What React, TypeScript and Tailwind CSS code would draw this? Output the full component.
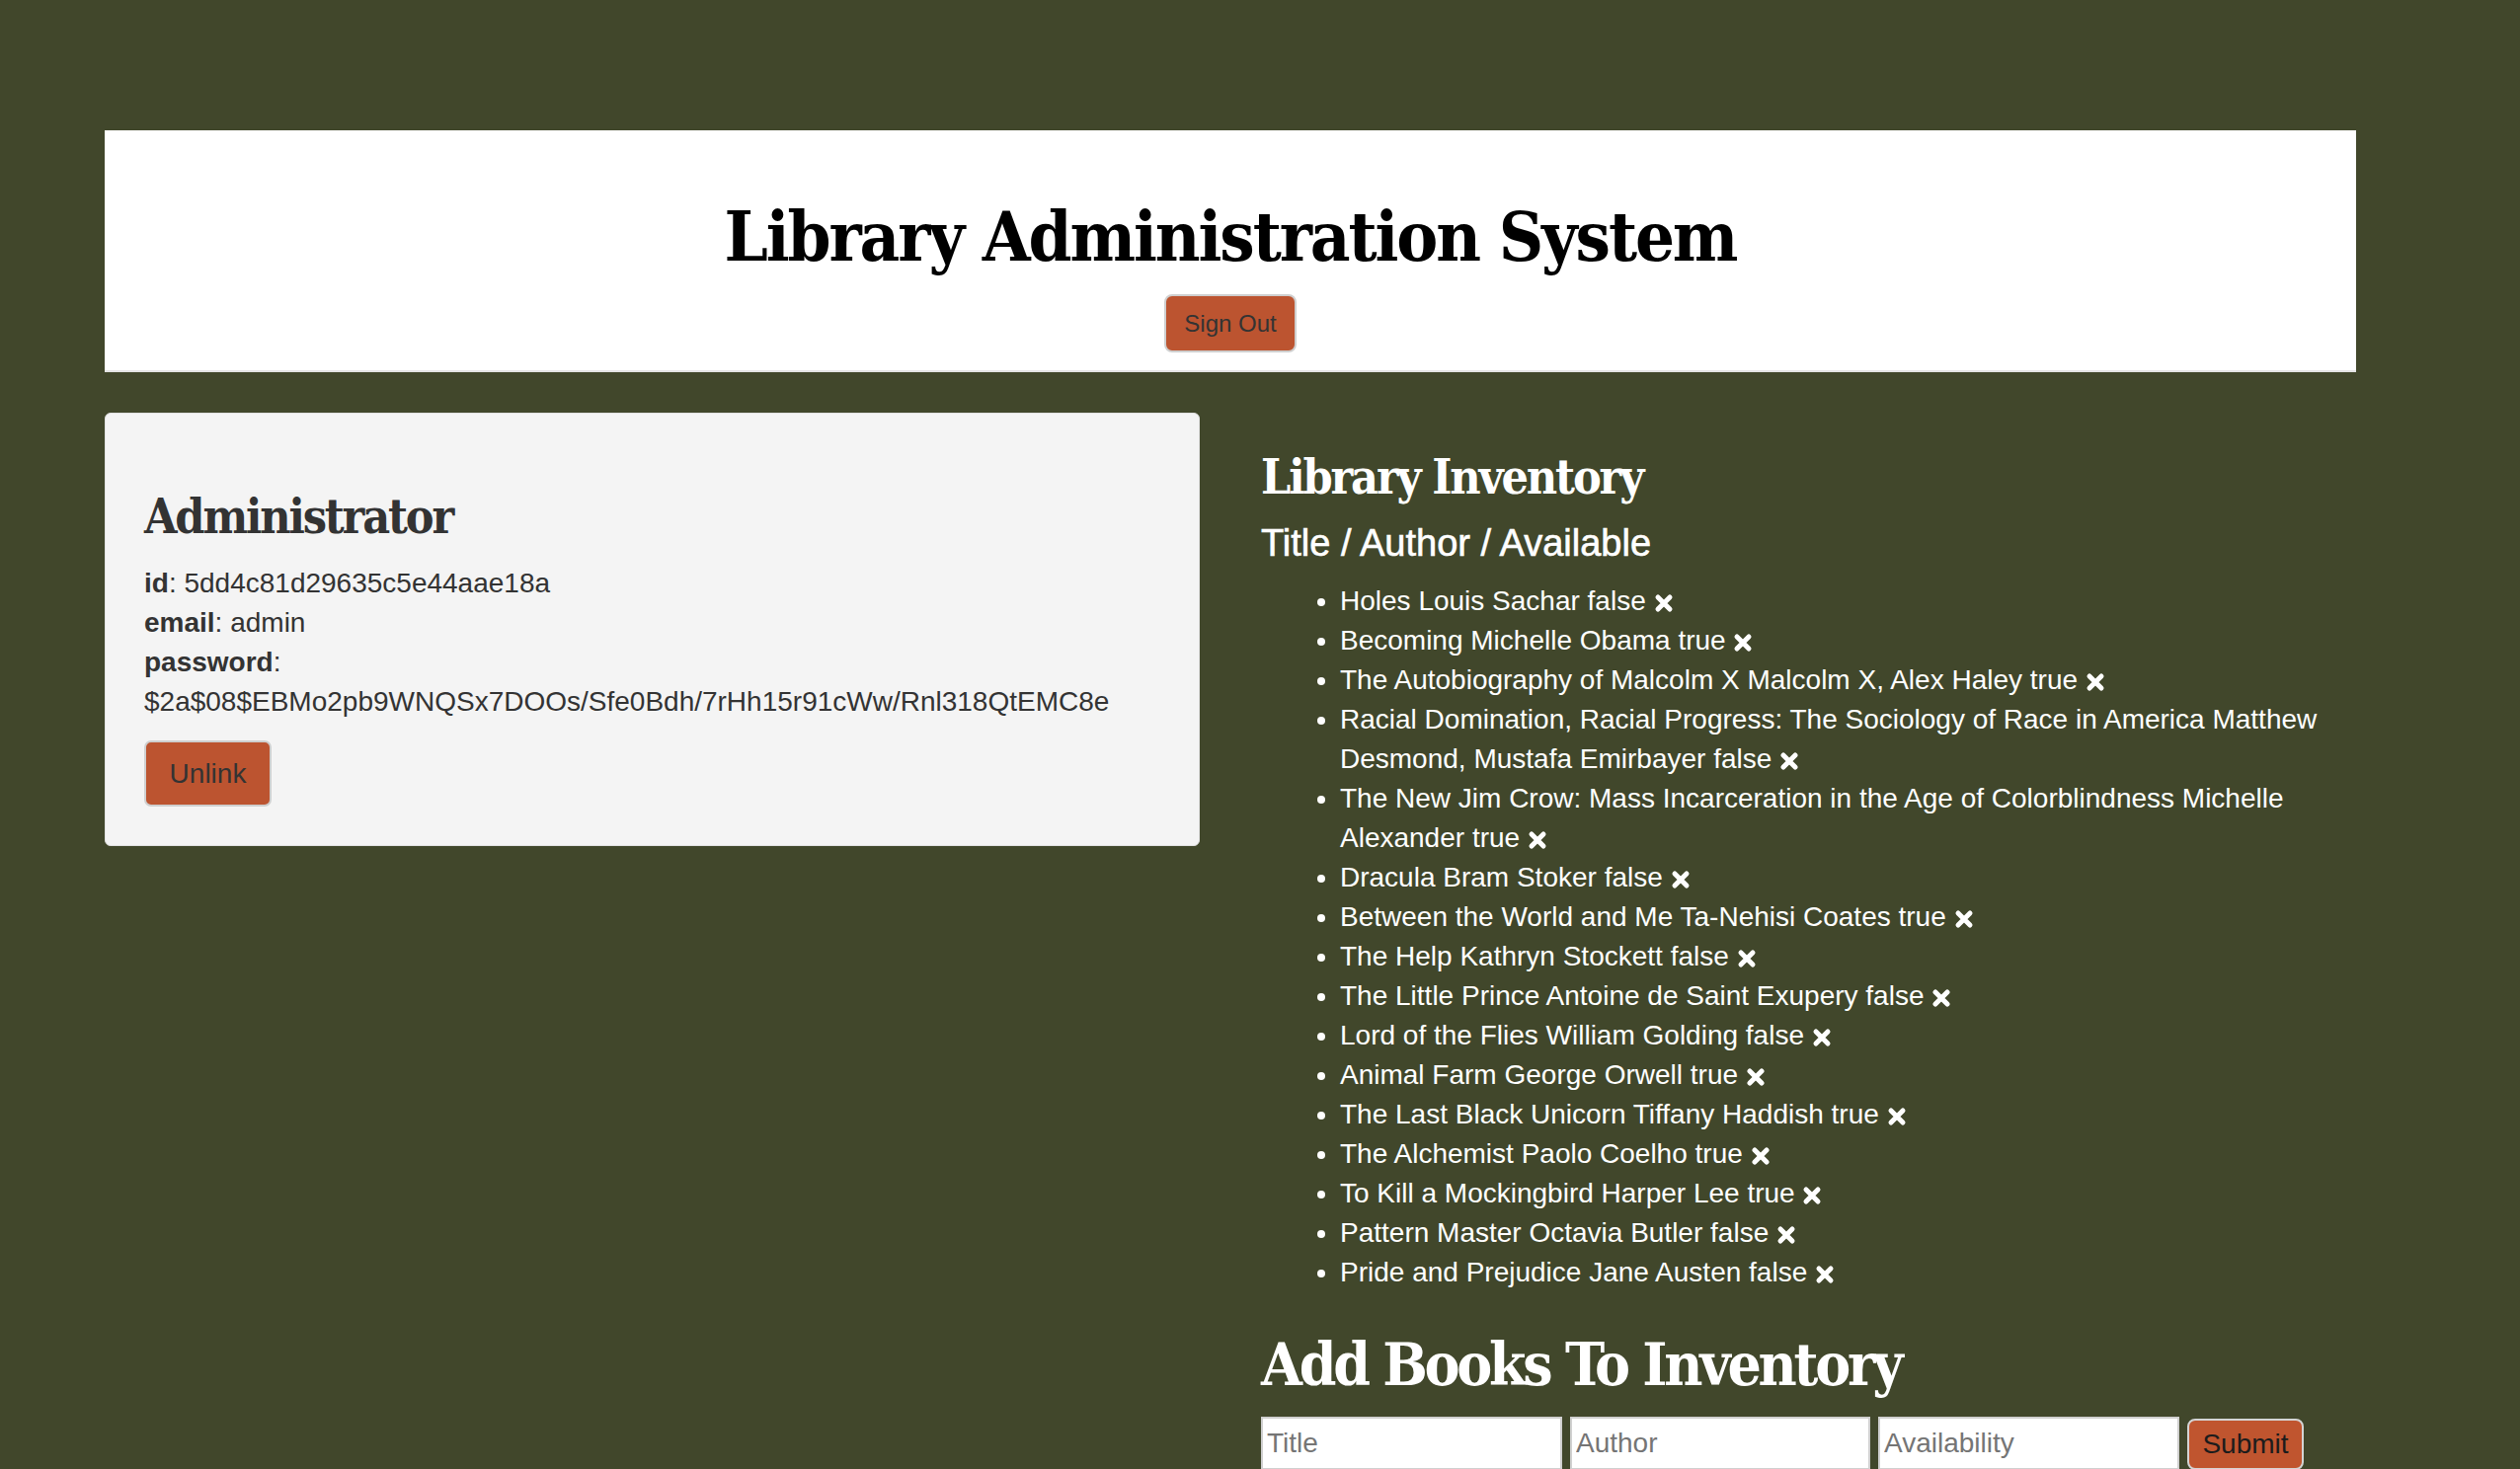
import React from 'react';

const books = [
  { title: 'Holes', author: 'Louis Sachar', available: false },
  { title: 'Becoming', author: 'Michelle Obama', available: true },
  { title: 'The Autobiography of Malcolm X', author: 'Malcolm X, Alex Haley', available: true },
  { title: 'Racial Domination, Racial Progress: The Sociology of Race in America', author: 'Matthew Desmond, Mustafa Emirbayer', available: false },
  { title: 'The New Jim Crow: Mass Incarceration in the Age of Colorblindness', author: 'Michelle Alexander', available: true },
  { title: 'Dracula', author: 'Bram Stoker', available: false },
  { title: 'Between the World and Me', author: 'Ta-Nehisi Coates', available: true },
  { title: 'The Help', author: 'Kathryn Stockett', available: false },
  { title: 'The Little Prince', author: 'Antoine de Saint Exupery', available: false },
  { title: 'Lord of the Flies', author: 'William Golding', available: false },
  { title: 'Animal Farm', author: 'George Orwell', available: true },
  { title: 'The Last Black Unicorn', author: 'Tiffany Haddish', available: true },
  { title: 'The Alchemist', author: 'Paolo Coelho', available: true },
  { title: 'To Kill a Mockingbird', author: 'Harper Lee', available: true },
  { title: 'Pattern Master', author: 'Octavia Butler', available: false },
  { title: 'Pride and Prejudice', author: 'Jane Austen', available: false },
];

const slab = "font-['DejaVu_Serif_Condensed','DejaVu_Serif',serif] font-bold";

// heavy "times" glyph used as the remove button
const TimesIcon = () => (
  <svg viewBox="0 0 20 20" className="inline h-[20px] w-[20px]" aria-hidden="true">
    <path d="M4 4 L16 16 M16 4 L4 16" stroke="#ffffff" strokeWidth="5" strokeLinecap="round" fill="none" />
  </svg>
);

const App = () => {
  return (
    <div className="min-h-screen bg-[#41472b] pt-[132px] pb-10 font-['Liberation_Sans',Arial,sans-serif]">
      <div className="ml-[106px] w-[2280px]">
        <header className="flex flex-col items-center border-b-2 border-[#e4e4e4] bg-white pt-[73px] pb-[18px]">
          <h1 className={`${slab} text-[70px] leading-none tracking-[-0.03em] text-black`}>Library Administration System</h1>
          <button className="mt-[23px] flex h-[59px] items-center rounded-[8px] border-2 border-[#cfcfcf] bg-[#bc5430] px-[18px] text-[24px] text-[#333]">
            Sign Out
          </button>
        </header>

        <div className="mt-[41px] grid grid-cols-2 gap-[62px]">
          <div className="self-start rounded-[6px] border border-[#e2e2e2] bg-[#f4f4f4] px-[39px] pt-[80px] pb-[39px] text-[#333]">
            <h2 className={`${slab} text-[48px] leading-none tracking-[-0.045em]`}>Administrator</h2>
            <div className="mt-[24px] text-[28px] leading-[40px]">
              <p><b>id</b>: 5dd4c81d29635c5e44aae18a</p>
              <p><b>email</b>: admin</p>
              <p><b>password</b>:</p>
              <p>$2a$08$EBMo2pb9WNQSx7DOOs/Sfe0Bdh/7rHh15r91cWw/Rnl318QtEMC8e</p>
            </div>
            <button className="mt-[19px] flex h-[67px] w-[129px] items-center justify-center rounded-[7px] border-2 border-[#cfcfcf] bg-[#bc5430] text-[28px] text-[#333]">
              Unlink
            </button>
          </div>

          <div className="pt-[41px] text-white">
            <h2 className={`${slab} text-[48px] leading-none tracking-[-0.045em]`}>Library Inventory</h2>
            <h3 className="mt-[24px] text-[38px] leading-none [-webkit-text-stroke:0.6px_white]">Title / Author / Available</h3>
            <ul className="mt-[20px] list-disc pl-[80px] text-[28px] leading-[40px]">
              {books.map((b, i) => (
                <li key={i}>
                  {b.title} {b.author} {String(b.available)} <TimesIcon />
                </li>
              ))}
            </ul>

            <h2 className={`${slab} mt-[43px] text-[60px] leading-none tracking-[-0.054em]`}>Add Books To Inventory</h2>
            <form className="mt-[23px] flex items-start gap-[8px]" onSubmit={(e) => e.preventDefault()}>
              <input placeholder="Title" className="h-[54px] w-[305px] border-2 border-[#d0d0d0] bg-white px-[4px] text-[28px] text-black placeholder:text-[#757575]" />
              <input placeholder="Author" className="h-[54px] w-[304px] border-2 border-[#d0d0d0] bg-white px-[4px] text-[28px] text-black placeholder:text-[#757575]" />
              <input placeholder="Availability" className="h-[54px] w-[305px] border-2 border-[#d0d0d0] bg-white px-[4px] text-[28px] text-black placeholder:text-[#757575]" />
              <button type="submit" className="mt-[2px] flex h-[52px] w-[118px] items-center justify-center rounded-[8px] border-2 border-[#d4d4d4] bg-[#c0552f] text-[28px] text-[#1c1c1c]">
                Submit
              </button>
            </form>
          </div>
        </div>
      </div>
    </div>
  );
};

export default App;
